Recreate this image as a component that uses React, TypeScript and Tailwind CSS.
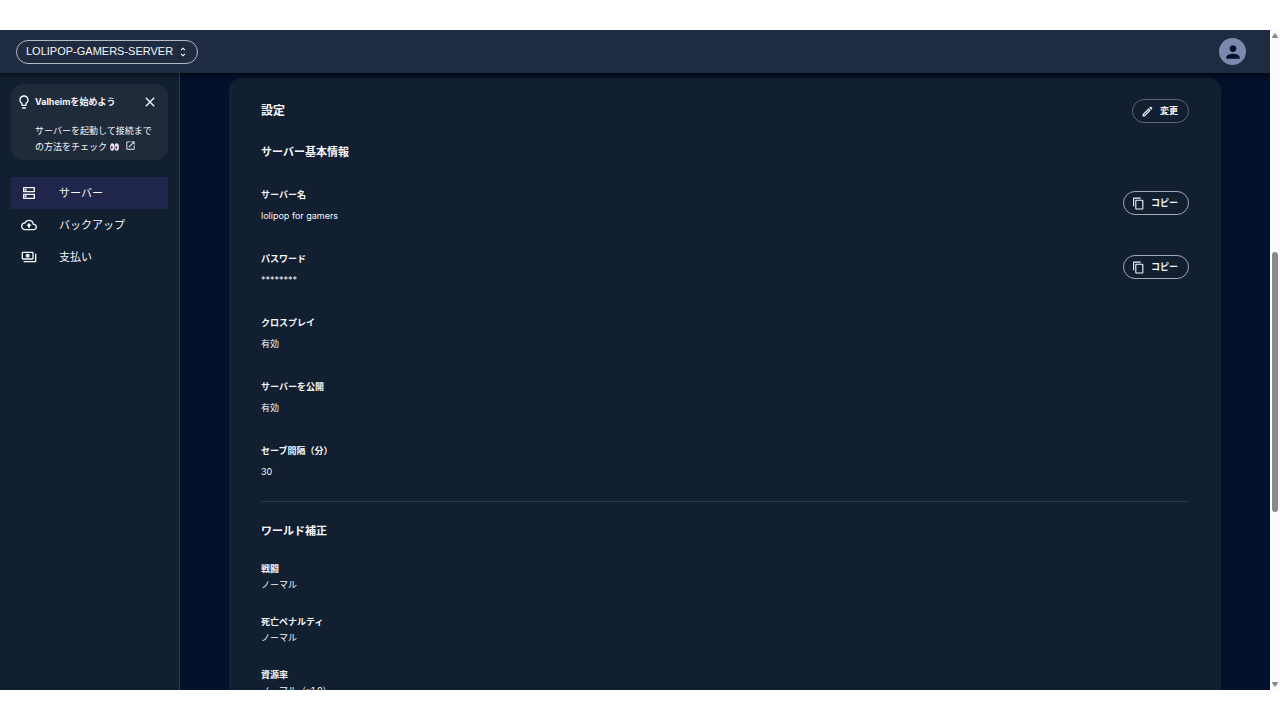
import type { ReactNode } from "react";
import {
  MdClose,
  MdContentCopy,
  MdLightbulbOutline,
  MdOpenInNew,
  MdOutlineBackup,
  MdOutlineDns,
  MdOutlineEdit,
  MdOutlinePayments,
  MdPerson,
  MdUnfoldMore,
} from "react-icons/md";

const serverInfo = [
  { label: "サーバー名", value: "lolipop for gamers", copy: true },
  { label: "パスワード", value: "********", copy: true },
  { label: "クロスプレイ", value: "有効", copy: false },
  { label: "サーバーを公開", value: "有効", copy: false },
  { label: "セーブ間隔（分）", value: "30", copy: false },
];

const worldModifiers = [
  { label: "戦闘", value: "ノーマル" },
  { label: "死亡ペナルティ", value: "ノーマル" },
  { label: "資源率", value: "ノーマル（x1.0）" },
];

const navItems = [
  { label: "サーバー", icon: MdOutlineDns, active: true },
  { label: "バックアップ", icon: MdOutlineBackup, active: false },
  { label: "支払い", icon: MdOutlinePayments, active: false },
];

function Eyes() {
  return (
    <svg viewBox="0 0 20 18" className="mx-[3px] inline-block h-2 w-[9px] align-[-1px]" aria-hidden="true">
      <ellipse cx="5" cy="9" rx="4.9" ry="8.5" fill="#f0e4f2" />
      <ellipse cx="15" cy="9" rx="4.9" ry="8.5" fill="#f0e4f2" />
      <ellipse cx="4" cy="10" rx="2" ry="3.6" fill="#5c4068" />
      <ellipse cx="14" cy="10" rx="2" ry="3.6" fill="#5c4068" />
    </svg>
  );
}

function PillButton({ icon, children, className = "border-[#a3abb8]" }: { icon: ReactNode; children: ReactNode; className?: string }) {
  return (
    <button
      type="button"
      className={`flex h-6 shrink-0 items-center gap-1.5 rounded-full border pr-2.5 pl-2 text-[9px] font-bold ${className}`}
    >
      {icon}
      {children}
    </button>
  );
}

function Header() {
  return (
    <header className="relative z-10 flex h-[43px] shrink-0 items-center justify-between bg-[#1f2b40] pr-6 pl-4 shadow-[0_2px_4px_rgba(0,0,0,0.5)]">
      <button
        type="button"
        className="flex h-6 items-center gap-1 rounded-full border border-[#b4bac4] pr-2 pl-[9px] font-['Liberation_Sans',sans-serif] text-[11px]"
      >
        LOLIPOP-GAMERS-SERVER
        <MdUnfoldMore className="size-3" />
      </button>
      <button
        type="button"
        aria-label="アカウント"
        className="flex size-[27px] items-center justify-center rounded-full bg-[#7d88ad] text-[#04112b]"
      >
        <MdPerson className="size-5" />
      </button>
    </header>
  );
}

function Sidebar() {
  return (
    <aside className="w-[180px] shrink-0 border-r border-[#303c4e] bg-[#121f31] px-[11px] pt-[11px]">
      <section className="rounded-xl bg-[#1f2a3b] pt-2.5 pr-2.5 pb-[5px] pl-[5px] text-[9px] leading-4">
        <div className="flex items-center">
          <MdLightbulbOutline className="mr-[3px] size-4" />
          <h2 className="flex-1 font-bold">Valheimを始めよう</h2>
          <button type="button" aria-label="閉じる">
            <MdClose className="size-4" />
          </button>
        </div>
        <a href="#guide" className="mt-[13px] block pl-[19px]">
          サーバーを起動して接続まで
          <br />
          の方法をチェック
          <Eyes />
          <MdOpenInNew className="ml-[3px] inline size-[11px] align-[-1px]" />
        </a>
      </section>
      <nav className="mt-[17px]">
        {navItems.map(({ label, icon: Icon, active }) => (
          <a
            key={label}
            href="#"
            className={`flex h-8 items-center gap-[22px] pl-2.5 text-[11px] ${active ? "bg-[#20264b]" : ""}`}
          >
            <Icon className="size-4" />
            {label}
          </a>
        ))}
      </nav>
    </aside>
  );
}

function Settings() {
  return (
    <main className="min-w-0 flex-1 overflow-hidden bg-[#03112b] px-[49px] pt-[5px]">
      <div className="rounded-xl bg-[#121f31] px-8 pt-[21px] pb-8 text-[9px] leading-4">
        <div className="flex items-center justify-between">
          <h1 className="text-xs font-bold">設定</h1>
          <PillButton icon={<MdOutlineEdit className="size-[13px]" />} className="border-[#5c6675]">
            変更
          </PillButton>
        </div>

        <h2 className="mt-[21px] text-[11px] leading-4 font-bold">サーバー基本情報</h2>
        <dl className="mt-[27px] flex flex-col gap-[27px]">
          {serverInfo.map(({ label, value, copy }) => (
            <div key={label} className="flex h-[37px] items-start justify-between">
              <div>
                <dt className="font-bold">{label}</dt>
                <dd className="mt-[5px]">{value}</dd>
              </div>
              {copy && (
                <dd className="pt-1">
                  <PillButton icon={<MdContentCopy className="size-[13px]" />}>コピー</PillButton>
                </dd>
              )}
            </div>
          ))}
        </dl>

        <hr className="mt-[21px] border-[#29384a]" />

        <h2 className="mt-[21px] text-[11px] leading-4 font-bold">ワールド補正</h2>
        <dl className="mt-[22px] flex flex-col gap-[21px]">
          {worldModifiers.map(({ label, value }) => (
            <div key={label}>
              <dt className="font-bold">{label}</dt>
              <dd>{value}</dd>
            </div>
          ))}
        </dl>
      </div>
    </main>
  );
}

function ScrollBar() {
  return (
    <div className="flex w-2.5 shrink-0 flex-col items-center bg-[#fcfcfc] py-[3px]" aria-hidden="true">
      <svg viewBox="0 0 6 5" className="h-[5px] w-1.5" fill="#8b8b8b">
        <path d="M2.4.4h1.2L6 4.2V5H0v-.8z" />
      </svg>
      <div className="flex-[214]" />
      <div className="w-1.5 flex-[260] rounded-full bg-[#8b8b8b]" />
      <div className="flex-[170]" />
      <svg viewBox="0 0 6 5" className="h-[5px] w-1.5" fill="#8b8b8b">
        <path d="M2.4 4.6h1.2L6 .8V0H0v.8z" />
      </svg>
    </div>
  );
}

export default function App() {
  return (
    <div className="flex h-screen bg-white py-[30px] font-['Inter','Noto_Sans_CJK_JP',sans-serif] text-[#f5f7fa]">
      <div className="flex min-w-0 flex-1 flex-col overflow-hidden">
        <Header />
        <div className="flex min-h-0 flex-1">
          <Sidebar />
          <Settings />
        </div>
      </div>
      <ScrollBar />
    </div>
  );
}
